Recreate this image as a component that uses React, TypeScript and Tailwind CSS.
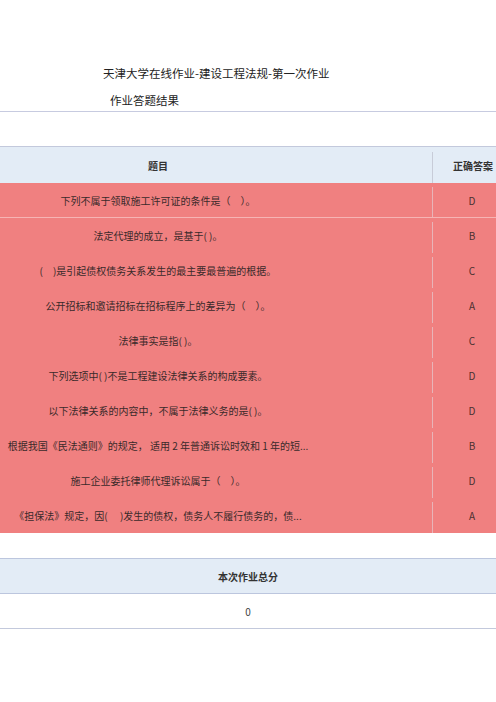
import React from "react";

const rows: [string, string][] = [
  ["下列不属于领取施工许可证的条件是（　）。", "D"],
  ["法定代理的成立，是基于( )。", "B"],
  ["(　)是引起债权债务关系发生的最主要最普遍的根据。", "C"],
  ["公开招标和邀请招标在招标程序上的差异为（　）。", "A"],
  ["法律事实是指( )。", "C"],
  ["下列选项中( )不是工程建设法律关系的构成要素。", "D"],
  ["以下法律关系的内容中，不属于法律义务的是( )。", "D"],
  ["根据我国《民法通则》的规定， 适用 2 年普通诉讼时效和 1 年的短...", "B"],
  ["施工企业委托律师代理诉讼属于（　）。", "D"],
  ["《担保法》规定，因(　 )发生的债权，债务人不履行债务的，债...", "A"],
];

export default function App() {
  return (
    <div
      className="w-[496px] h-[702px] bg-white overflow-hidden text-[#333]"
      style={{ fontFamily: '"Noto Sans CJK SC", "Noto Sans", sans-serif' }}
    >
      <div className="pt-[64px] pl-[103px] text-[11.5px] leading-[18px] text-[#222]">
        天津大学在线作业-建设工程法规-第一次作业
      </div>
      <div className="pt-[9px] pl-[110px] text-[11.5px] leading-[18px] text-[#222]">
        作业答题结果
      </div>
      <div className="mt-[2px] border-t border-[#c7cbe0]" />
      <div className="h-[34px]" />
      {/* table */}
      <div className="border-t border-[#c3c9dc]">
        <div className="flex h-[36px] bg-[#e3ecf6]">
          <div className="w-[432px] pr-[116px] flex items-center justify-center text-[10px] font-semibold text-[#333]">
            题目
          </div>
          <div className="flex-1 relative flex items-center pl-[21px] text-[10px] font-semibold text-[#333] whitespace-nowrap">
            <div className="absolute left-0 top-[5px] bottom-0 w-px bg-[#c8ccd8]" />
            正确答案
          </div>
        </div>
        {rows.map(([q, a], i) => (
          <div
            key={i}
            className={
              "flex h-[35px] bg-[#f08080] " +
              (i === 0 ? "border-b border-[#f6b4b4]" : "")
            }
          >
            <div className="w-[432px] pr-[116px] flex items-center justify-center text-[10px] text-[#3a2a2a] whitespace-nowrap">
              {q}
            </div>
            <div className="flex-1 relative flex items-center pl-[16px] justify-center text-[10px] text-[#4a3030]">
              <div className="absolute left-0 top-[4px] bottom-0 w-px bg-[#e8b4b8]" />
              {a}
            </div>
          </div>
        ))}
      </div>
      <div className="h-[25px]" />
      <div className="border-t border-b border-[#bcc6de] h-[36px] bg-[#e3ecf6] flex items-center justify-center text-[10px] font-semibold text-[#333]">
        本次作业总分
      </div>
      <div className="border-b border-[#c3c9dc] h-[35px] flex items-center justify-center text-[10px] text-[#444]">
        0
      </div>
    </div>
  );
}
